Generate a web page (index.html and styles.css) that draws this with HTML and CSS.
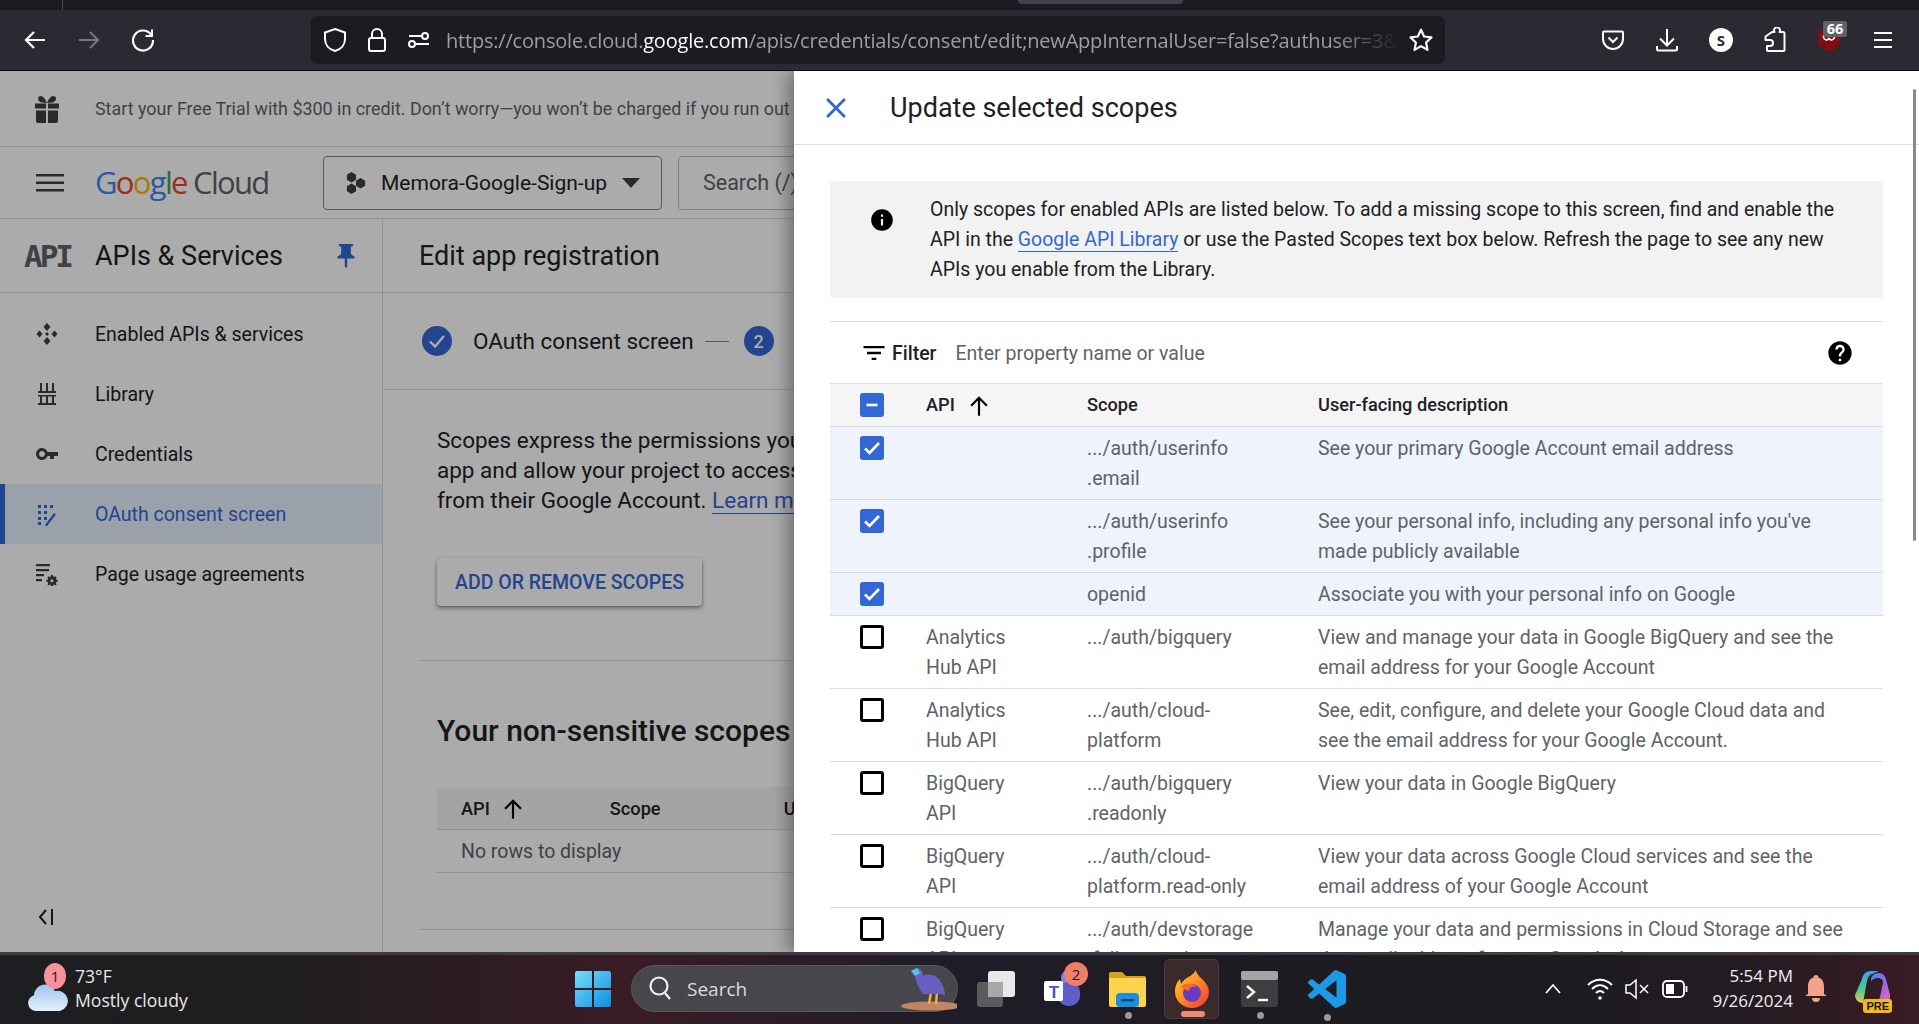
FILE: index.html
```html
<!DOCTYPE html>
<html lang="en">
<head>
<meta charset="utf-8">
<title>Update selected scopes</title>
<link rel="stylesheet" href="styles.css">
</head>
<body>
<div class="tabstrip"><span class="tab-sep"></span><span class="tab-active"></span></div>
<header class="toolbar">
  <button class="tb-btn"><svg width="24" height="24" viewBox="0 0 24 24" fill="none" stroke="#fbfbfe" stroke-width="2.2"><path d="M22 12H3M11 4l-8 8 8 8"/></svg></button>
  <button class="tb-btn"><svg width="24" height="24" viewBox="0 0 24 24" fill="none" stroke="#77767e" stroke-width="2.2"><path d="M2 12h19M13 4l8 8-8 8"/></svg></button>
  <button class="tb-btn"><svg width="24" height="24" viewBox="0 0 24 24" fill="none" stroke="#fbfbfe" stroke-width="2.2"><path d="M20 6.5A10 10 0 1 0 22 12"/><path d="M21 1.5V8h-6.5" stroke-width="2"/></svg></button>
  <div class="urlbar">
    <svg class="u-ic" width="24" height="26" viewBox="0 0 24 26" fill="none" stroke="#fbfbfe" stroke-width="2"><path d="M12 2l10 3.5V12c0 6-4 10.500-10 12C6 22.500 2 18 2 12V5.500z"/></svg>
    <svg class="u-ic u-lock" width="20" height="26" viewBox="0 0 20 26" fill="none" stroke="#fbfbfe" stroke-width="2"><rect x="2" y="11" width="16" height="13" rx="2"/><path d="M5 11V7a5 5 0 0 1 10 0v4"/></svg>
    <svg class="u-ic u-site" width="24" height="18" viewBox="0 0 24 18" fill="none" stroke="#fbfbfe" stroke-width="2"><circle cx="18" cy="5" r="3"/><circle cx="5" cy="13" r="3"/><path d="M2 5h12M9 13h13"/></svg>
    <div class="url-text">https://console.cloud.<b>google.com</b>/apis/credentials/consent/edit;newAppInternalUser=false?authuser=3&amp;</div>
    <svg class="star" width="26" height="26" viewBox="0 0 24 24" fill="none" stroke="#fbfbfe" stroke-width="2" stroke-linejoin="round"><path d="M12 2.500l2.900 6.300 6.800.8-5 4.700 1.300 6.800-6-3.400-6 3.400 1.300-6.800-5-4.700 6.800-.8z"/></svg>
  </div>
  <div class="tb-right">
    <button class="tb-btn"><svg width="24" height="24" viewBox="0 0 24 24" fill="none" stroke="#fbfbfe" stroke-width="2"><path d="M3 3.500h18a1 1 0 0 1 1 1V11a10 10 0 0 1-20 0V4.500a1 1 0 0 1 1-1z"/><path d="M7.500 9.500L12 14l4.500-4.500"/></svg></button>
    <button class="tb-btn"><svg width="24" height="26" viewBox="0 0 24 26" fill="none" stroke="#fbfbfe" stroke-width="2"><path d="M12 2v16M5 11.500l7 7 7-7M2 19v3a1.500 1.500 0 0 0 1.500 1.500h17A1.500 1.500 0 0 0 22 22v-3"/></svg></button>
    <button class="tb-btn"><span class="avatar">S</span></button>
    <button class="tb-btn"><svg width="24" height="26" viewBox="0 0 24 26" fill="none" stroke="#fbfbfe" stroke-width="2" stroke-linejoin="round"><path d="M9 5h2.500a3 3 0 1 1 5 0H20a1.500 1.500 0 0 1 1.500 1.500V23a1 1 0 0 1-1 1H5a1 1 0 0 1-1-1v-4h3a3 3 0 0 0 0-6H2.500V9.500z"/></svg></button>
    <button class="tb-btn ublock"><svg class="ub-shield" width="22" height="23" viewBox="0 0 22 23"><path d="M0 1h22v11c0 5-5 8.500-11 11C5 20.500 0 17 0 12z" fill="#800e14"/><path d="M5.500 6v2a3 3 0 0 0 5.500 1.500A3 3 0 0 0 16.500 8V6" fill="none" stroke="#fff" stroke-width="1.600"/></svg><span class="ub-count">66</span></button>
    <button class="tb-btn"><svg width="20" height="18" viewBox="0 0 20 18" fill="none" stroke="#fbfbfe" stroke-width="2"><path d="M1 2h18M1 9h18M1 16h18"/></svg></button>
  </div>
</header>

<div class="page">
  <div class="banner">
    <svg class="gift" width="28" height="28" viewBox="0 0 28 28" fill="#3c4043"><path d="M2 8.500h11v5H2zM15 8.500h11v5H15zM3 15.500h10V28H5a2 2 0 0 1-2-2zM15 15.500h10V26a2 2 0 0 1-2 2h-8z"/><path d="M14 8C11 1 8 0 6 1.500S5 7 9 7.500zM14 8c3-7 6-8 8-6.500S23 7 19 7.500z"/></svg>
    <span class="banner-text">Start your Free Trial with $300 in credit. Don’t worry—you won’t be charged if you run out of credits.</span>
  </div>
  <div class="topbar">
    <svg class="burger" width="28" height="18" viewBox="0 0 28 18" fill="#3c4043"><path d="M0 0h28v2.600H0zM0 7.500h28v2.600H0zM0 15h28v2.600H0z"/></svg>
    <div class="gc-logo"><span class="c-b">G</span><span class="c-r">o</span><span class="c-y">o</span><span class="c-b">g</span><span class="c-g">l</span><span class="c-r">e</span> <span class="c-k">Cloud</span></div>
    <div class="project">
      <svg width="20" height="24" viewBox="0 0 22 24" fill="#3c4043"><path d="M6 0l5 3v5.500l-5 3-5-3V3zM6 12.500l5 3V21l-5 3-5-3v-5.500zM16 6.500l5 3V15l-5 3-5-3V9.500z"/></svg>
      <span class="project-name">Memora-Google-Sign-up</span>
      <svg class="caret" width="18" height="10" viewBox="0 0 18 10" fill="#3c4043"><path d="M0 0h18L9 10z"/></svg>
    </div>
    <div class="searchbox">Search (/) for resources, docs, products, and more</div>
  </div>
  <div class="body-row">
    <aside class="sidebar">
      <div class="side-head">
        <span class="api-ic">API</span>
        <span class="side-title">APIs &amp; Services</span>
        <svg class="pin" width="20" height="24" viewBox="4 2 16 20" fill="#3367d6"><path d="M16 9V4h1c.55 0 1-.45 1-1s-.45-1-1-1H7c-.55 0-1 .45-1 1s.45 1 1 1h1v5c0 1.660-1.340 3-3 3v2h5.970v7l1 1 1-1v-7H19v-2c-1.660 0-3-1.340-3-3z"/></svg>
      </div>
      <nav class="nav">
        <a class="nav-item"><svg width="24" height="24" viewBox="0 0 24 24" fill="#3c4043"><path d="M12 1l3.500 4L12 9 8.500 5zM12 15l3.500 4-3.500 4-3.500-4zM4.500 8.500L7.500 12l-3 3.500L1.500 12zM19.500 8.500l3 3.500-3 3.500-3-3.500z"/><path d="M12 10l2 2-2 2-2-2z"/></svg><span>Enabled APIs &amp; services</span></a>
        <a class="nav-item"><svg width="24" height="24" viewBox="0 0 24 24" fill="#3c4043"><path d="M5 1h2v8H5zM11 1h2v8h-2zM17 1h2v8h-2zM3 9h18v2H3zM5 14h2v8H5zM11 14h2v8h-2zM17 14h2v8h-2zM3 13h18v1.500H3zM3 21h18v2H3z"/></svg><span>Library</span></a>
        <a class="nav-item"><svg width="24" height="24" viewBox="0 0 24 24" fill="#3c4043"><path d="M12.650 10C11.830 7.670 9.610 6 7 6c-3.310 0-6 2.690-6 6s2.690 6 6 6c2.610 0 4.830-1.670 5.650-4H15v3h4v-3h4v-4H12.650zM7 15c-1.650 0-3-1.350-3-3s1.350-3 3-3 3 1.350 3 3-1.350 3-3 3z"/></svg><span>Credentials</span></a>
        <a class="nav-item active"><svg width="24" height="24" viewBox="0 0 24 24" fill="#3367d6"><path d="M3 3h3v3H3zM9 3h3v3H9zM15 3h3v3h-3zM3 9h3v3H3zM9 9h3v3H9zM3 15h3v3H3zM3 20h3v3H3zM9 15h3v3H9zM10 23l9-12 1.800 1.400-9 12z"/></svg><span>OAuth consent screen</span></a>
        <a class="nav-item"><svg width="24" height="24" viewBox="0 0 24 24" fill="#3c4043"><path d="M1 2h14v2.200H1zM1 7h13v2.200H1zM1 12h8v2.200H1zM1 17h6v2.200H1z"/><path d="M23 16.500l-2-.4-.5-1.200 1.100-1.700-1.700-1.700-1.700 1.100-1.200-.5-.4-2h-2.400l-.4 2-1.200.5-1.700-1.100-1.700 1.700 1.100 1.700-.5 1.200-2 .4v2.400l2 .4.500 1.200-1.100 1.700 1.700 1.700 1.700-1.100 1.200.5.4 2h2.400l.4-2 1.200-.5 1.700 1.100 1.700-1.700-1.100-1.700.5-1.200 2-.4zm-7.800 3.200a2 2 0 1 1 0-4 2 2 0 0 1 0 4z" transform="translate(5.500 5.500) scale(.75)"/></svg><span>Page usage agreements</span></a>
      </nav>
      <div class="collapse"><svg width="18" height="20" viewBox="0 0 18 20" fill="none" stroke="#202124" stroke-width="2"><path d="M9 3L3 10l6 7M15 2v16"/></svg></div>
    </aside>
    <main class="main">
      <div class="main-title">Edit app registration</div>
      <div class="stepper">
        <span class="step-dot"><svg width="20" height="20" viewBox="0 0 20 20" fill="none" stroke="#fff" stroke-width="2.400"><path d="M3 10.500l5 5L17 5"/></svg></span>
        <span class="step-label">OAuth consent screen</span>
        <span class="step-dash"></span>
        <span class="step-dot">2</span>
      </div>
      <div class="content">
        <p class="lead">Scopes express the permissions you request users to authorize for your<br>app and allow your project to access specific types of private user data<br>from their Google Account. <a class="link">Learn more</a></p>
        <button class="add-btn">ADD OR REMOVE SCOPES</button>
        <div class="rule"></div>
        <h2 class="sec-title">Your non-sensitive scopes</h2>
        <div class="mini-table">
          <div class="mini-head"><span class="mh-api">API</span><svg width="26" height="26" viewBox="0 0 24 24" fill="#000"><path d="M4 12l1.410 1.410L11 7.830V22h2V7.830l5.580 5.590L20 12l-8-8-8 8z"/></svg><span class="mh-scope">Scope</span><span class="mh-desc">User-facing description</span></div>
          <div class="mini-row">No rows to display</div>
        </div>
        <div class="rule rule-2"></div>
      </div>
    </main>
  </div>
  <div class="scrim"></div>
  <section class="drawer">
    <div class="drawer-head">
      <svg class="close" width="34" height="34" viewBox="0 0 24 24" fill="#3367d6"><path d="M19 6.410L17.590 5 12 10.590 6.410 5 5 6.410 10.590 12 5 17.590 6.410 19 12 13.410 17.590 19 19 17.590 13.410 12z"/></svg>
      <h1 class="drawer-title">Update selected scopes</h1>
    </div>
    <div class="drawer-body">
      <div class="info">
        <svg class="info-ic" width="26" height="26" viewBox="0 0 24 24" fill="#000"><path d="M12 2C6.480 2 2 6.480 2 12s4.480 10 10 10 10-4.480 10-10S17.520 2 12 2zm1 15h-2v-6h2v6zm0-8h-2V7h2v2z"/></svg>
        <p>Only scopes for enabled APIs are listed below. To add a missing scope to this screen, find and enable the<br>API in the <a class="link">Google API Library</a> or use the Pasted Scopes text box below. Refresh the page to see any new<br>APIs you enable from the Library.</p>
      </div>
      <div class="filter">
        <svg width="28" height="28" viewBox="0 0 24 24" fill="#000"><path d="M10 18h4v-2h-4v2zM3 6v2h18V6H3zm3 7h12v-2H6v2z"/></svg>
        <span class="filter-label">Filter</span>
        <span class="filter-ph">Enter property name or value</span>
        <svg class="help" width="28" height="28" viewBox="0 0 24 24" fill="#000"><path d="M12 2C6.480 2 2 6.480 2 12s4.480 10 10 10 10-4.480 10-10S17.520 2 12 2zm1 17h-2v-2h2v2zm2.070-7.750l-.9.920C13.450 12.900 13 13.500 13 15h-2v-.5c0-1.100.45-2.100 1.170-2.830l1.240-1.260c.37-.36.59-.86.59-1.410 0-1.100-.9-2-2-2s-2 .9-2 2H8c0-2.210 1.790-4 4-4s4 1.790 4 4c0 .88-.36 1.680-.93 2.250z"/></svg>
      </div>
      <table class="scopes">
        <colgroup><col class="c1"><col class="c2"><col class="c3"><col class="c4"></colgroup>
        <thead><tr>
          <th><span class="cb on"><svg width="24" height="24" viewBox="0 0 24 24" stroke="#fff" stroke-width="2.600"><path d="M6.500 12h11"/></svg></span></th>
          <th><span class="th-api">API<svg width="26" height="26" viewBox="0 0 24 24" fill="#000"><path d="M4 12l1.410 1.410L11 7.830V22h2V7.830l5.580 5.590L20 12l-8-8-8 8z"/></svg></span></th>
          <th>Scope</th><th>User-facing description</th>
        </tr></thead>
        <tbody>
          <tr class="sel"><td><span class="cb on"><svg width="24" height="24" viewBox="0 0 24 24" fill="none" stroke="#fff" stroke-width="2.600"><path d="M5 12.500l4.500 4.500L19 7"/></svg></span></td><td></td><td>.../auth/userinfo<br>.email</td><td>See your primary Google Account email address</td></tr>
          <tr class="sel"><td><span class="cb on"><svg width="24" height="24" viewBox="0 0 24 24" fill="none" stroke="#fff" stroke-width="2.600"><path d="M5 12.500l4.500 4.500L19 7"/></svg></span></td><td></td><td>.../auth/userinfo<br>.profile</td><td>See your personal info, including any personal info you've<br>made publicly available</td></tr>
          <tr class="sel"><td><span class="cb on"><svg width="24" height="24" viewBox="0 0 24 24" fill="none" stroke="#fff" stroke-width="2.600"><path d="M5 12.500l4.500 4.500L19 7"/></svg></span></td><td></td><td>openid</td><td>Associate you with your personal info on Google</td></tr>
          <tr><td><span class="cb"></span></td><td>Analytics<br>Hub API</td><td>.../auth/bigquery</td><td>View and manage your data in Google BigQuery and see the<br>email address for your Google Account</td></tr>
          <tr><td><span class="cb"></span></td><td>Analytics<br>Hub API</td><td>.../auth/cloud-<br>platform</td><td>See, edit, configure, and delete your Google Cloud data and<br>see the email address for your Google Account.</td></tr>
          <tr><td><span class="cb"></span></td><td>BigQuery<br>API</td><td>.../auth/bigquery<br>.readonly</td><td>View your data in Google BigQuery</td></tr>
          <tr><td><span class="cb"></span></td><td>BigQuery<br>API</td><td>.../auth/cloud-<br>platform.read-only</td><td>View your data across Google Cloud services and see the<br>email address of your Google Account</td></tr>
          <tr><td><span class="cb"></span></td><td>BigQuery<br>API</td><td>.../auth/devstorage<br>.full_control</td><td>Manage your data and permissions in Cloud Storage and see<br>the email address for your Google Account</td></tr>
        </tbody>
      </table>
    </div>
    <span class="scrollbar"></span>
  </section>
</div>

<footer class="taskbar">
  <div class="weather">
    <svg class="cloud" width="42" height="32" viewBox="0 0 42 32"><defs><linearGradient id="cl" x1="0" y1="0" x2="0" y2="1"><stop offset="0" stop-color="#9cc4ee"/><stop offset="1" stop-color="#e6f0fc"/></linearGradient></defs><path d="M10 30a8 8 0 0 1-2-15.700A11 11 0 0 1 29 10a9 9 0 0 1 5 20z" fill="url(#cl)"/></svg>
    <span class="w-badge">1</span>
    <div class="w-text"><div>73°F</div><div>Mostly cloudy</div></div>
  </div>
  <svg class="winlogo" width="36" height="36" viewBox="0 0 36 36"><defs><linearGradient id="wl" x1="0" y1="0" x2="1" y2="1"><stop offset="0" stop-color="#7bdcfb"/><stop offset="1" stop-color="#0b8fe0"/></linearGradient></defs><path d="M0 2a2 2 0 0 1 2-2h15v17H0zM19 0h15a2 2 0 0 1 2 2v15H19zM0 19h17v17H2a2 2 0 0 1-2-2zM19 19h17v15a2 2 0 0 1-2 2H19z" fill="url(#wl)"/></svg>
  <div class="tsearch">
    <svg width="24" height="26" viewBox="0 0 24 26" fill="none" stroke="#f0f0f0" stroke-width="2.200"><circle cx="11" cy="10" r="8.500"/><path d="M17 17l5 6"/></svg>
    <span>Search</span>
    <svg class="bird" width="70" height="46" viewBox="0 0 70 46"><ellipse cx="44" cy="40" rx="30" ry="4.500" fill="#c28564"/><path d="M44 26l-2 12M50 26l-1 12" stroke="#e8b23c" stroke-width="2.500"/><path d="M36 28c-4-6-8-12-8-20l-4-3 6-3c4 0 6 4 6 8 4-3 14-2 18 6 3 5 4 10 4 14-6-4-14-1-22-2z" fill="#6b5ec2"/><path d="M24 5l6-3 3 5-5 3z" fill="#4fc4e4"/></svg>
  </div>
  <div class="apps">
    <span class="app a-task"><svg width="38" height="36" viewBox="0 0 38 36"><rect x="0" y="11" width="26" height="25" rx="3" fill="#5b5b5d"/><rect x="11" y="0" width="27" height="26" rx="3" fill="#e8e8ea"/><rect x="11" y="11" width="15" height="15" fill="#a8a8aa"/></svg></span>
    <span class="app a-teams"><svg width="38" height="40" viewBox="0 0 38 40"><circle cx="25" cy="9" r="8" fill="#7b83eb"/><rect x="14" y="13" width="22" height="24" rx="10" fill="#5b5fc7"/><rect x="0" y="12" width="19" height="20" rx="2" fill="#fff"/></svg><b class="t-letter">T</b><span class="t-badge">2</span></span>
    <span class="app a-folder"><svg width="37" height="36" viewBox="0 0 37 36"><path d="M0 3a2 2 0 0 1 2-2h11l4 4h18a2 2 0 0 1 2 2v3H0z" fill="#d9a21b"/><path d="M0 7h37v27a2 2 0 0 1-2 2H2a2 2 0 0 1-2-2z" fill="#fcd34d"/><rect x="7" y="22" width="23" height="14" rx="4" fill="#1b8fd8"/><rect x="12" y="28" width="13" height="2.500" fill="#0c4d86"/></svg><i class="dot"></i></span>
    <span class="app a-ff"><svg width="36" height="38" viewBox="0 0 36 38"><defs><linearGradient id="ff" x1="0" y1="0" x2="1" y2="1"><stop offset="0" stop-color="#ffd23c"/><stop offset=".5" stop-color="#ff8a1f"/><stop offset="1" stop-color="#f0323c"/></linearGradient></defs><path d="M22 0c0 7 13 11 13 22a17 16 0 0 1-34 0c0-6 2-10 5-13l1 5c4-7 11-7 15-14z" fill="url(#ff)"/><circle cx="18" cy="23" r="9" fill="#6a3bc0"/><path d="M7 16c5-4 13-3 15 1-5-1-7 1-7 4-3-1-6-2-8-5z" fill="#ff6a28"/></svg><i class="ff-line"></i></span>
    <span class="app a-term"><svg width="37" height="36" viewBox="0 0 37 36"><rect width="37" height="36" rx="3" fill="#3e3e40"/><rect width="37" height="9" rx="2" fill="#a5a5a7"/><path d="M6 15l7 6-7 6" fill="none" stroke="#fff" stroke-width="2.400"/><path d="M17 29h10" stroke="#fff" stroke-width="2.400"/></svg><i class="dot"></i></span>
    <span class="app a-code"><svg width="38" height="40" viewBox="0 0 24 24" fill="#1c9ae6"><path d="M23.150 2.587L18.210.21a1.494 1.494 0 0 0-1.705.29l-9.460 8.630-4.120-3.128a.999.999 0 0 0-1.276.057L.327 7.261A1 1 0 0 0 .326 8.740L3.899 12 .326 15.260a1 1 0 0 0 .001 1.479L1.650 17.940a.999.999 0 0 0 1.276.057l4.120-3.128 9.460 8.630a1.492 1.492 0 0 0 1.704.29l4.942-2.377A1.500 1.500 0 0 0 24 20.060V3.939a1.500 1.500 0 0 0-.85-1.352zm-5.146 14.861L10.826 12l7.178-5.448v10.896z"/></svg><i class="dot"></i></span>
  </div>
  <div class="tray">
    <svg width="18" height="12" viewBox="0 0 18 12" fill="none" stroke="#fff" stroke-width="1.800"><path d="M2 10l7-8 7 8"/></svg>
    <svg class="tr-wifi" width="26" height="24" viewBox="0 0 26 24" fill="none" stroke="#fff" stroke-width="1.800"><path d="M1 8c7-7 17-7 24 0M5 12c5-5 11-5 16 0M9 16c2.500-2.500 5.500-2.500 8 0"/><circle cx="13" cy="21" r="1.800" fill="#fff" stroke="none"/></svg>
    <svg class="tr-vol" width="24" height="22" viewBox="0 0 24 22" fill="none" stroke="#fff" stroke-width="1.500"><path d="M1 7h4l6-5v18l-6-5H1zM15 7l8 8M23 7l-8 8"/></svg>
    <svg class="tr-bat" width="26" height="18" viewBox="0 0 26 18" fill="none" stroke="#fff" stroke-width="1.800"><rect x="1" y="1" width="21" height="16" rx="4"/><rect x="4" y="4" width="8" height="10" fill="#fff" stroke="none"/><path d="M24.500 6v6"/></svg>
    <div class="clock"><div>5:54 PM</div><div>9/26/2024</div></div>
    <svg class="bell" width="22" height="28" viewBox="0 0 22 28" fill="#f2a488"><path d="M11 0a2.500 2.500 0 0 1 2.500 2.500C18 4 19 8 19 12v7l3 2H0l3-2v-7c0-4 1-8 5.500-9.500A2.500 2.500 0 0 1 11 0zM7 23h8a4 4 0 0 1-8 0z"/></svg>
    <span class="copilot"><svg width="36" height="36" viewBox="0 0 36 36"><defs><linearGradient id="co1" x1="0" y1="0" x2="0" y2="1"><stop offset="0" stop-color="#2fa8f0"/><stop offset=".6" stop-color="#53c98c"/><stop offset="1" stop-color="#e8c83c"/></linearGradient><linearGradient id="co2" x1="0" y1="0" x2="1" y2="1"><stop offset="0" stop-color="#3f8cf0"/><stop offset=".6" stop-color="#a864e0"/><stop offset="1" stop-color="#f06ab0"/></linearGradient></defs><path d="M8 8c1-5 4-8 9-8h8l-7 3c-3 1-4 3-5 7l-4 22c-4 0-8-3-8-8z" fill="url(#co1)"/><path d="M17 8c.6-3 3-6 8-6 4 0 6 3 7 6l4 16c.6 4-2 8-7 8h-9c3 0 5-2 6-6l3-14c.5-3-2-5-5-5-3 0-5 1-7 3z" fill="url(#co2)"/></svg><b class="pre">PRE</b></span>
  </div>
</footer>
</body>
</html>
```

FILE: styles.css
```css
* { box-sizing: border-box; }
html, body { margin: 0; padding: 0; height: 100%; }
body { width: 1919px; height: 1024px; overflow: hidden; display: flex; flex-direction: column; font-family: Roboto, "Liberation Sans", sans-serif; background: #fff; color: #202124; }
button { border: 0; background: none; padding: 0; font: inherit; }
p, h1, h2 { margin: 0; font-weight: 400; }
svg { display: block; flex: none; }

.tabstrip { height: 10px; flex: none; background: #1c1b22; position: relative; }
.tab-sep { position: absolute; left: 62px; top: 0; width: 1px; height: 10px; background: #4a4950; }
.tab-active { position: absolute; left: 1018px; top: 0; width: 165px; height: 4px; background: #42414d; border-radius: 0 0 4px 4px; }

.toolbar { height: 61px; flex: none; background: #2b2a33; border-bottom: 1px solid #0c0c0d; display: flex; align-items: center; padding: 0 9px 1px 8px; }
.tb-btn { width: 54px; height: 40px; display: flex; align-items: center; justify-content: center; position: relative; flex: none; }
.urlbar { margin-left: 141px; width: 1134px; height: 48px; background: #1c1b22; border-radius: 6px; display: flex; align-items: center; padding: 0 11px 0 12px; }
.u-lock { margin-left: 20px; }
.u-site { margin-left: 20px; }
.url-text { margin-left: 15px; width: 953px; flex: none; padding-top: 1px; overflow: hidden; white-space: nowrap; font: 20px "Open Sans", sans-serif; color: #9e9da3; letter-spacing: -.2px; -webkit-mask-image: linear-gradient(90deg, #000 93%, transparent); mask-image: linear-gradient(90deg, #000 93%, transparent); }
.url-text b { font-weight: 400; color: #fbfbfe; }
.star { margin-left: auto; }
.tb-right { margin-left: auto; display: flex; }
.avatar { width: 24px; height: 24px; border-radius: 50%; background: #fff; color: #2b2a33; font: 700 15px "Open Sans", sans-serif; display: flex; align-items: center; justify-content: center; }
.ub-shield { margin-top: 1px; }
.ub-count { position: absolute; left: 21px; top: 1px; width: 24px; height: 16px; background: #5f6368; color: #fff; border-radius: 2px; font: 700 14.500px/16px "Open Sans", sans-serif; text-align: center; }

.page { flex: 1; position: relative; overflow: hidden; display: flex; flex-direction: column; min-height: 0; }
.banner { height: 76px; flex: none; border-bottom: 1px solid #dadce0; display: flex; align-items: center; padding-left: 33px; background: #fff; white-space: nowrap; }
.banner-text { margin-left: 34px; font-size: 17.900px; color: #5f6368; }
.topbar { height: 72px; flex: none; border-bottom: 1px solid #dadce0; display: flex; align-items: center; padding-left: 36px; white-space: nowrap; overflow: hidden; }
.gc-logo { margin-left: 31px; width: 228px; margin-top: -2px; font: 400 31px "Open Sans", sans-serif; letter-spacing: -1.700px; flex: none; }
.c-b { color: #4285f4; } .c-r { color: #ea4335; } .c-y { color: #fbbc04; } .c-g { color: #34a853; } .c-k { color: #5f6368; }
.project { width: 339px; height: 54px; border: 1px solid #80868b; border-radius: 4px; display: flex; align-items: center; padding-left: 22px; flex: none; }
.project-name { margin-left: 15px; font-size: 21px; }
.caret { margin-left: auto; margin-right: 21px; }
.searchbox { margin-left: 16px; height: 54px; width: 900px; flex: none; border: 1px solid #bdc1c6; border-radius: 4px; padding-left: 24px; font-size: 21.500px; line-height: 52px; color: #5f6368; }

.body-row { flex: 1; display: flex; min-height: 0; }
.sidebar { width: 383px; flex: none; border-right: 1px solid #dadce0; display: flex; flex-direction: column; position: relative; }
.side-head { height: 74px; flex: none; border-bottom: 1px solid #dadce0; display: flex; align-items: center; padding-left: 24px; }
.api-ic { width: 48px; font: 700 31px "DejaVu Sans Mono", monospace; color: #5f6368; letter-spacing: -3px; }
.side-title { margin-left: 23px; font-size: 27px; }
.pin { margin-left: auto; margin-right: 26px; }
.nav { padding-top: 11px; }
.nav-item { height: 60px; display: flex; align-items: center; padding-left: 30px; font-size: 19.500px; border-left: 5px solid transparent; }
.nav-item span { margin-left: 36px; }
.nav-item.active { background: #e8f0fe; color: #3367d6; border-left-color: #3367d6; }
.collapse { margin-top: auto; padding: 0 0 25px 37px; }

.main { flex: 1; min-width: 0; overflow: hidden; white-space: nowrap; }
.main-title { height: 74px; border-bottom: 1px solid #dadce0; padding-left: 36px; font-size: 27px; line-height: 75px; }
.stepper { height: 97px; border-bottom: 1px solid #dadce0; display: flex; align-items: center; padding-left: 39px; }
.step-dot { width: 30px; height: 30px; border-radius: 50%; background: #3367d6; color: #fff; display: flex; align-items: center; justify-content: center; font-size: 18px; flex: none; font-weight: 500; }
.step-label { margin-left: 21px; font-size: 22.500px; }
.step-dash { margin: 0 15px 0 11px; width: 24px; height: 1px; background: #80868b; }
.content { padding-left: 36px; }
.lead { margin: 35px 0 0 18px; font-size: 22.500px; line-height: 30px; }
.link { color: #3367d6; border-bottom: 1px solid #3367d6; }
.add-btn { display: block; margin: 43px 0 0 18px; width: 265px; height: 48px; border-radius: 4px; background: #fff; color: #3367d6; font-weight: 500; font-size: 19.500px; box-shadow: 0 1px 3px rgba(0,0,0,.3), 0 3px 5px rgba(0,0,0,.25); }
.rule { margin-top: 54px; height: 1px; background: #dadce0; }
.sec-title { margin: 52px 0 0 18px; font-size: 30px; line-height: 36px; font-weight: 500; }
.mini-table { margin: 38px 0 0 18px; }
.mini-head { height: 43px; background: #f5f5f5; border-bottom: 1px solid #dadce0; display: flex; align-items: center; padding-left: 24px; font-size: 18.200px; font-weight: 500; }
.mh-api { margin-right: 10px; }
.mh-scope { margin-left: 84px; }
.mh-desc { margin-left: 123px; }
.mini-row { height: 43px; border-bottom: 1px solid #dadce0; padding-left: 24px; line-height: 44px; font-size: 19.500px; color: #5f6368; }
.rule-2 { margin-top: 56px; }

.scrim { position: absolute; inset: 0; background: rgba(0,0,0,.33); }
.drawer { position: absolute; left: 794px; top: 0; right: 0; bottom: 0; background: #fff; box-shadow: -6px 0 16px rgba(0,0,0,.35); overflow: hidden; }
.drawer-head { height: 74px; border-bottom: 1px solid #dadce0; display: flex; align-items: center; padding-left: 25px; }
.drawer-title { margin-left: 37px; font-size: 27px; }
.drawer-body { padding: 36px 36px 0; }
.info { height: 117px; background: #f2f2f2; border-radius: 4px; padding: 14px 0 0 100px; position: relative; font-size: 19.500px; line-height: 30px; white-space: nowrap; }
.info-ic { position: absolute; left: 39px; top: 26px; }
.filter { margin-top: 23px; height: 62px; border-top: 1px solid #dadce0; display: flex; align-items: center; padding: 2px 0 0 30px; font-size: 19.500px; }
.filter > svg { margin-top: -2px; }
.filter-label { margin-left: 4px; font-weight: 500; }
.filter-ph { margin-left: 19px; color: #5f6368; }
.filter > .help { margin-left: auto; margin-right: 29px; }
.scopes { width: 1053px; table-layout: fixed; border-collapse: separate; border-spacing: 0; font-size: 19.500px; line-height: 30px; color: #5f6368; }
.c1 { width: 96px; } .c2 { width: 161px; } .c3 { width: 231px; }
.scopes th { height: 44px; padding: 0; background: #f5f5f5; border-top: 1px solid #dadce0; border-bottom: 1px solid #dadce0; text-align: left; font-weight: 500; font-size: 18.200px; color: #202124; vertical-align: middle; }
.scopes td { padding: 7px 0 5px; border-bottom: 1px solid #dadce0; vertical-align: top; white-space: nowrap; }
.scopes td:first-child { padding: 6px 0 6px 30px; }
.scopes th:first-child { padding-left: 30px; }
.sel td { background: #eef3fc; }
.cb { display: block; width: 24px; height: 24px; border: 3px solid #000; border-radius: 3px; background: #fff; margin-top: 3px; }
.scopes th .cb { margin-top: 0; }
.cb.on { border: 0; background: #3367d6; }
.th-api { display: flex; align-items: center; gap: 11px; }

.scrollbar { position: absolute; right: 3px; top: 18px; width: 3px; height: 452px; background: #8a8a8a; border-radius: 2px; }

.taskbar { height: 72px; flex: none; border-top: 3px solid #3f3c3f; padding-bottom: 2px; background: linear-gradient(90deg, #1d1e21 0, #1e1d20 15%, #3a1c25 33%, #201c28 48%, #1f1c24 60%, #1b1b1f 78%, #221c22 90%, #3a1b24 100%); display: flex; align-items: center; position: relative; color: #fff; font-family: "Open Sans", sans-serif; }
.weather { width: 575px; flex: none; height: 100%; display: flex; align-items: center; padding-left: 26px; position: relative; }
.cloud { margin-top: 16px; }
.w-badge { position: absolute; left: 44px; top: 8px; width: 22px; height: 26px; border-radius: 50%; background: #f7919a; color: #2a1a1c; font-size: 15px; line-height: 26px; text-align: center; }
.w-text { margin-left: 7px; margin-top: -1px; font-size: 17.600px; line-height: 24px; color: #e8e8e8; white-space: nowrap; }
.tsearch { margin-left: 20px; width: 327px; height: 47px; border-radius: 24px; background: #47464a; border: 1px solid #5a595d; display: flex; align-items: center; padding-left: 16px; font-size: 19px; color: #dcdcdc; flex: none; position: relative; }
.tsearch span { margin-left: 15px; }
.bird { margin-left: auto; }
.apps { display: flex; align-items: center; height: 100%; margin-left: 19px; }
.app { position: relative; display: block; flex: none; }
.a-task { width: 38px; }
.a-teams { margin-left: 29px; width: 38px; }
.t-letter { position: absolute; left: 3px; top: 14px; width: 14px; color: #4b53bc; font: 700 17px "Liberation Sans", sans-serif; text-align: center; }
.t-badge { position: absolute; left: 20px; top: -7px; width: 24px; height: 24px; border-radius: 50%; background: #ef7f68; color: #2a1a1c; font-size: 15px; line-height: 24px; text-align: center; }
.a-folder { margin-left: 27px; width: 37px; }
.dot { position: absolute; left: 50%; bottom: -12px; width: 7px; height: 7px; margin-left: -3px; border-radius: 50%; background: #9a9a9a; }
.a-ff { margin-left: 18px; width: 55px; height: 60px; border-radius: 5px; background: #3a2a2c; border: 1px solid #4a3a3c; padding: 10px 0 0 9px; }
.ff-line { position: absolute; left: 16px; bottom: 1px; width: 24px; height: 6px; border-radius: 3px; background: #f28a70; }
.a-term { margin-left: 22px; width: 37px; }
.a-code { margin-left: 30px; width: 38px; }
.tray { margin-left: auto; margin-right: 29px; display: flex; align-items: center; }
.tr-wifi { margin-left: 25px; }
.tr-vol { margin-left: 12px; }
.tr-bat { margin-left: 13px; }
.clock { margin-left: 0; width: 105px; margin-top: -1px; text-align: right; font-size: 17px; line-height: 25px; color: #f0f0f0; white-space: nowrap; }
.bell { margin-left: 12px; }
.copilot { margin-left: 27px; position: relative; display: block; }
.pre { position: absolute; right: -2px; bottom: -6px; background: #f4b71c; color: #1a1a1a; border-radius: 3px; font: 700 11px/14px "Liberation Sans", sans-serif; padding: 0 3px; }
```
